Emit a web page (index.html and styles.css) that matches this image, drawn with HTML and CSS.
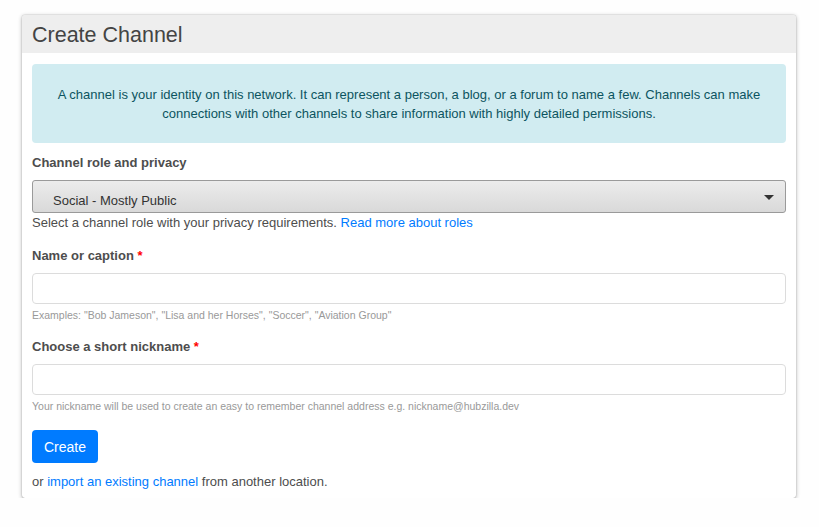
FILE: index.html
```html
<!DOCTYPE html>
<html>
<head>
<meta charset="utf-8">
<link rel="stylesheet" href="styles.css">
</head>
<body>
<div class="card">
  <div class="card-header"><h2 class="title">Create Channel</h2></div>
  <div class="card-body">
    <div class="alert">A channel is your identity on this network. It can represent a person, a blog, or a forum to name a few. Channels can make connections with other channels to share information with highly detailed permissions.</div>

    <div class="field field-first">
      <label class="label">Channel role and privacy</label>
      <div class="select">
        <span class="select-text">Social - Mostly Public</span>
        <span class="caret"></span>
      </div>
      <div class="help">Select a channel role with your privacy requirements. <a class="link" href="#">Read more about roles</a></div>
    </div>

    <div class="field">
      <label class="label">Name or caption <span class="req">*</span></label>
      <div class="input"></div>
      <div class="small">Examples: "Bob Jameson", "Lisa and her Horses", "Soccer", "Aviation Group"</div>
    </div>

    <div class="field">
      <label class="label">Choose a short nickname <span class="req">*</span></label>
      <div class="input"></div>
      <div class="small">Your nickname will be used to create an easy to remember channel address e.g. nickname@hubzilla.dev</div>
    </div>

    <button class="btn">Create</button>
    <div class="footer-text">or <a class="link" href="#">import an existing channel</a> from another location.</div>
  </div>
</div>
</body>
</html>
```

FILE: styles.css
```css
html, body {
  margin: 0;
  padding: 0;
  background: #fefefe;
}
body {
  padding: 15px 0 0 22px;
  font-family: "Liberation Sans", Arial, sans-serif;
  font-size: 13px;
  line-height: 18px;
  color: #4d4d4d;
}
.card {
  width: 774px;
  background: #fff;
  border-radius: 3px;
  box-shadow: 0 0 1px rgba(0,0,0,0.45), 0 1px 4px rgba(0,0,0,0.3);
  overflow: hidden;
}
.card-header {
  background: #eeeeee;
  height: 38px;
  display: flex;
  align-items: center;
  padding: 0 10px;
}
.title {
  margin: 0;
  font-size: 21.5px;
  font-weight: normal;
  color: #444;
  line-height: 26px;
  padding-top: 1px;
}
.card-body {
  padding: 11px 10px 7px 10px;
}
.alert {
  background: #d1ecf1;
  color: #0c5460;
  border-radius: 4px;
  padding: 21px 20px 20px 20px;
  line-height: 19px;
  text-align: center;
}
.field {
  margin-top: 15px;
}
.field-first {
  margin-top: 11px;
}
.label {
  display: block;
  font-weight: bold;
  margin-bottom: 8px;
  color: #4d4d4d;
}
.req {
  color: #ff0000;
}
.select {
  height: 31px;
  border: 1px solid #9a9a9a;
  border-radius: 3px;
  background: linear-gradient(#ececec, #d9d9d9);
  display: flex;
  justify-content: space-between;
  align-items: flex-start;
  overflow: hidden;
  padding: 0 11px 0 20px;
}
.select-text {
  display: block;
  color: #333;
  margin-top: 11px;
  line-height: 18px;
}
.caret {
  margin-top: 14px;
  width: 0;
  height: 0;
  border-left: 5px solid transparent;
  border-right: 5px solid transparent;
  border-top: 5px solid #333;
}
.help {
  margin-top: 1px;
  color: #4d4d4d;
}
.link {
  color: #007bff;
  text-decoration: none;
}
.input {
  height: 29px;
  border: 1px solid #dcdcdc;
  border-radius: 4px;
  background: #fff;
}
.small {
  margin-top: 4px;
  font-size: 10.5px;
  line-height: 15px;
  color: #999;
}
.btn {
  margin-top: 16px;
  display: block;
  background: #007bff;
  color: #fff;
  border: none;
  border-radius: 4px;
  font-family: "Liberation Sans", Arial, sans-serif;
  font-size: 14px;
  height: 33px;
  padding: 0 12px;
  cursor: pointer;
}
.footer-text {
  margin-top: 10px;
}
```
